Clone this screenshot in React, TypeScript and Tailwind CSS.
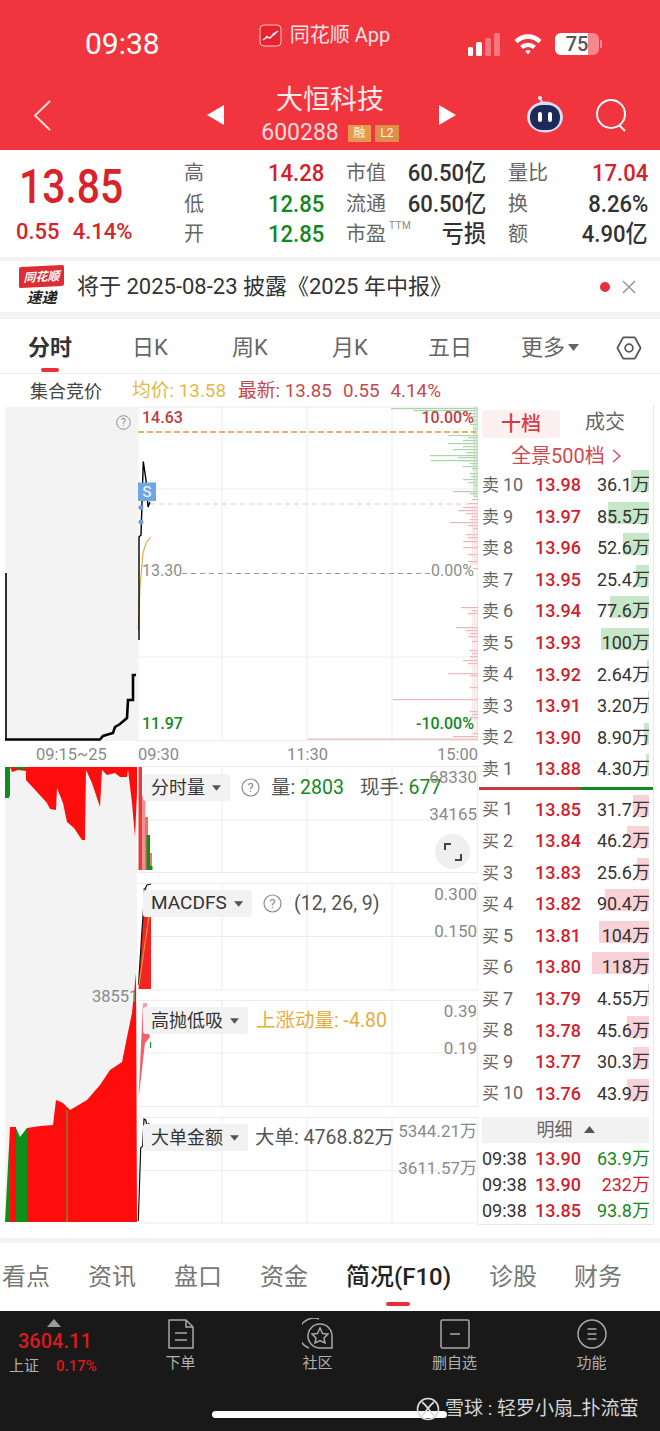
import React from 'react';

const asks = [
  { name: '卖', no: '10', price: '13.98', vol: '36.1万', bar: 18 },
  { name: '卖', no: '9', price: '13.97', vol: '85.5万', bar: 41 },
  { name: '卖', no: '8', price: '13.96', vol: '52.6万', bar: 26 },
  { name: '卖', no: '7', price: '13.95', vol: '25.4万', bar: 13 },
  { name: '卖', no: '6', price: '13.94', vol: '77.6万', bar: 39 },
  { name: '卖', no: '5', price: '13.93', vol: '100万', bar: 48 },
  { name: '卖', no: '4', price: '13.92', vol: '2.64万', bar: 2 },
  { name: '卖', no: '3', price: '13.91', vol: '3.20万', bar: 1 },
  { name: '卖', no: '2', price: '13.90', vol: '8.90万', bar: 5 },
  { name: '卖', no: '1', price: '13.88', vol: '4.30万', bar: 3 },
];

const bids = [
  { name: '买', no: '1', price: '13.85', vol: '31.7万', bar: 16 },
  { name: '买', no: '2', price: '13.84', vol: '46.2万', bar: 22 },
  { name: '买', no: '3', price: '13.83', vol: '25.6万', bar: 12 },
  { name: '买', no: '4', price: '13.82', vol: '90.4万', bar: 44 },
  { name: '买', no: '5', price: '13.81', vol: '104万', bar: 50 },
  { name: '买', no: '6', price: '13.80', vol: '118万', bar: 57 },
  { name: '买', no: '7', price: '13.79', vol: '4.55万', bar: 1 },
  { name: '买', no: '8', price: '13.78', vol: '45.6万', bar: 22 },
  { name: '买', no: '9', price: '13.77', vol: '30.3万', bar: 16 },
  { name: '买', no: '10', price: '13.76', vol: '43.9万', bar: 22 },
];

const greenDepth = [
  [408, 87], [410, 65], [413, 20], [416, 8], [420, 5], [424, 8], [428, 5], [435, 30], [437, 10], [440, 15],
  [443, 30], [446, 15], [449, 25], [452, 12], [455, 48], [457, 20], [460, 15], [463, 8], [466, 15], [468, 6],
  [460, 47], [473, 8], [476, 7], [479, 15], [482, 10], [485, 5], [491, 25], [493, 8], [496, 5], [499, 6],
];

const pinkDepth = [
  [503, 10], [507, 15], [510, 20], [513, 12], [516, 6], [519, 8], [522, 28], [525, 10], [528, 5], [534, 12],
  [537, 10], [541, 15], [547, 15], [554, 10], [561, 10], [568, 5], [607, 17], [610, 6], [613, 10], [627, 22],
  [630, 12], [633, 8], [636, 10], [641, 6], [650, 8], [653, 6], [656, 8], [660, 15], [663, 10], [673, 30],
  [675, 8], [687, 8], [699, 85], [711, 8], [714, 6], [717, 8], [733, 5], [736, 25], [738.5, 170],
];

const Caret = () => (
  <svg width="10" height="6" viewBox="0 0 10 6" className="ml-[7px]">
    <path d="M0 0H10L5 6Z" fill="#555" />
  </svg>
);

const Help = ({ className = '' }: { className?: string }) => (
  <svg width="19" height="19" viewBox="0 0 19 19" className={className}>
    <circle cx="9.5" cy="9.5" r="8.5" fill="none" stroke="#8a8a8a" strokeWidth="1.2" />
    <text x="9.5" y="14" textAnchor="middle" fontSize="13" fill="#8a8a8a" fontFamily="Roboto">?</text>
  </svg>
);

const Chip = ({ label, w, size = 'text-[18px]' }: { label: string; w: string; size?: string }) => (
  <div className={`flex h-[27px] items-center justify-between rounded-[3px] bg-[#f2f2f2] pl-[8px] pr-[9px] text-[#333] ${size} ${w}`}>
    <span className="whitespace-nowrap">{label}</span>
    <Caret />
  </div>
);

const ChartSvg = () => (
  <svg className="absolute inset-0" width="478" height="820" viewBox="0 405 478 820">
    {/* left auction panes */}
    <rect x="5" y="407" width="132" height="334" fill="#f3f3f3" />
    <rect x="5" y="766" width="132" height="456" fill="#f3f3f3" />

    {/* grid */}
    <g stroke="#ececec" strokeWidth="1" fill="none">
      <path d="M138 407H478M138 489H478M138 657H478M138 740.5H478" />
      <path d="M138 407V741M222 407V741M307 407V741M392 407V741M477.5 407V741" />
      <path d="M138 766.5H478M138 820H478M138 872.5H478M138 883.5H478M138 936.5H478M138 990H478M138 1000.5H478M138 1053H478M138 1106.5H478M138 1117.5H478M138 1170.5H478M138 1223H478" />
      <path d="M222 766V872M307 766V872M392 766V872M477.5 766V872" />
      <path d="M222 883V990M307 883V990M392 883V990M477.5 883V990" />
      <path d="M222 1000V1107M307 1000V1107M392 1000V1107M477.5 1000V1107" />
      <path d="M222 1117V1223M307 1117V1223M392 1117V1223M477.5 1117V1223" />
    </g>

    {/* depth bars */}
    {greenDepth.map(([y, len]) => (
      <rect key={`g${y}-${len}`} x={478 - len} y={y} width={len} height="1.2" fill="#a9d6a9" />
    ))}
    <rect x="473" y="407" width="5" height="90" fill="#bfe0bf" opacity="0.6" />
    {pinkDepth.map(([y, len]) => (
      <rect key={`p${y}-${len}`} x={478 - len} y={y} width={len} height="1.2" fill="#efb4b8" />
    ))}
    <rect x="472" y="505" width="6" height="60" fill="#f3c8cb" opacity="0.4" />
    <rect x="472" y="610" width="6" height="125" fill="#f3c8cb" opacity="0.35" />

    {/* price lines */}
    <path d="M138 432H476" stroke="#d99a3c" strokeWidth="1.4" strokeDasharray="6 3" />
    <path d="M150 504H476" stroke="#e2cdb8" strokeWidth="1" strokeDasharray="5 4" />
    <path d="M182 573.5H430" stroke="#999" strokeWidth="1" strokeDasharray="5 4" />
    <path d="M6 740V573" fill="none" stroke="#000" strokeWidth="1.6" />
    <path d="M5 739.5H100L103 736L113 733L115 727L120 724L127 718L128 700H133V675H136" fill="none" stroke="#000" strokeWidth="2.6" />
    <path d="M138.3 630L140 587L143 553L146 543L150.7 537" fill="none" stroke="#e0ad45" strokeWidth="1.2" />
    <path d="M139 640V537L141 535L143.3 461.5L146 480L148 507L150 502" fill="none" stroke="#000" strokeWidth="1.4" />
    <rect x="138" y="482.5" width="18" height="18.5" fill="#6da7e6" />
    <text x="147" y="497" textAnchor="middle" fontSize="15" fill="#fff" fontFamily="Roboto">S</text>
    <circle cx="141" cy="507.5" r="2.5" fill="#6d9be0" />
    <circle cx="141" cy="522" r="2.5" fill="#6d9be0" />

    {/* upper auction area */}
    <path d="M5 767H10V795L9 798H5Z" fill="#0d8f1a" />
    <path d="M10 767H26V771L18 770L12 772Z" fill="#ff0d0d" />
    <path d="M13 767H25V769L17 769Z" fill="#0d8f1a" />
    <path d="M26 767V780L37 792L47 803L50 809L56 810L57 788L63 803L67 822L74 828L82 840H85L86 770L92 783L100 807L102 770L107 775L115 773L120 777L127 777L128 770L132 803L135 837L137 793V767Z" fill="#ff0d0d" />

    {/* lower auction area */}
    <path d="M5 1222L10 1127H16V1222Z" fill="#0d8f1a" />
    <path d="M10 1127H16V1222H10Z" fill="#ff0d0d" />
    <path d="M16 1128L20 1137L27 1128V1222H16Z" fill="#0d8f1a" />
    <path d="M27 1128L40 1126L53 1125L56 1100L63 1103L70 1110L87 1100L100 1085L110 1070L122 1062L127 1037L132 1013L136 973L137 1222H27Z" fill="#ff0d0d" />
    <rect x="66" y="1110" width="2" height="112" fill="#a0622a" />

    {/* volume */}
    <rect x="138.5" y="767" width="3.5" height="103" fill="#e53c3c" />
    <rect x="142" y="796" width="3.5" height="74" fill="#ef8f8f" />
    <rect x="145" y="817" width="3" height="53" fill="#ef6d6d" />
    <rect x="146.5" y="835" width="3.5" height="35" fill="#0d8f1a" />
    <rect x="150" y="853" width="2" height="17" fill="#e8757a" />
    <rect x="150" y="866" width="2.5" height="4" fill="#0d8f1a" />

    {/* macd */}
    <path d="M138.5 989L143 914L151 908V989Z" fill="#f22424" />
    <rect x="143" y="888" width="3.5" height="28" fill="#e89a9a" />
    <path d="M138.5 985L142 930L145 889L147 885L151 884" fill="none" stroke="#111" strokeWidth="1.2" />
    <path d="M139 985L144 950L150 910" fill="none" stroke="#f0952e" strokeWidth="1.2" />

    {/* high low */}
    <path d="M138.5 1098L143 1003L146 1003L147 1027L150 1037L145 1043L141 1078Z" fill="#f2606a" />
    <rect x="143" y="1003" width="4" height="28" fill="#f0a0a0" />
    <rect x="150" y="1042" width="1.2" height="6" fill="#1a9a40" />

    {/* big order */}
    <path d="M138.3 1221L140.7 1148L142.7 1146L144 1119L145.7 1120L147.7 1128L149 1123" fill="none" stroke="#111" strokeWidth="1.2" />
  </svg>
);

const MainChart = () => (
  <div className="relative h-[335px] text-[16px] leading-none">
    <Help className="absolute left-[114px] top-[6px] scale-[0.8]" />
    <span className="absolute left-[142px] top-[3px] font-medium text-[#c23b40]">14.63</span>
    <span className="absolute right-[4px] top-[3px] font-medium text-[#c23b40]">10.00%</span>
    <span className="absolute left-[142px] top-[156px] text-[#8c8c8c]">13.30</span>
    <span className="absolute right-[4px] top-[156px] text-[#8c8c8c]">0.00%</span>
    <span className="absolute left-[142px] top-[309px] font-medium text-[#13881f]">11.97</span>
    <span className="absolute right-[4px] top-[309px] font-medium text-[#13881f]">-10.00%</span>
  </div>
);

const TimeAxis = () => (
  <div className="flex h-[26px] items-center text-[16.5px] text-[#8a8a8a]">
    <span className="ml-[36px] w-[102px]">09:15~25</span>
    <span className="w-[149px]">09:30</span>
    <span className="w-[150px]">11:30</span>
    <span>15:00</span>
  </div>
);

const Panel = ({ className = '', children }: { className?: string; children: React.ReactNode }) => (
  <div className={`relative h-[107px] ${className}`}>{children}</div>
);

const AxisLabel = ({ top, children }: { top: string; children: React.ReactNode }) => (
  <span className={`absolute right-[1px] text-[17px] leading-none text-[#8a8a8a] ${top}`}>{children}</span>
);

const SubPanels = () => (
  <div className="flex flex-col">
    <Panel>
      <div className="absolute left-[143px] top-[5px] flex items-center whitespace-nowrap">
        <Chip label="分时量" w="w-[87px]" />
        <Help className="ml-[11px]" />
        <span className="ml-[11px] text-[19.5px] text-[#555]">量: <span className="text-[#13881f]">2803</span></span>
        <span className="ml-[16px] text-[19.5px] text-[#555]">现手: <span className="text-[#13881f]">677</span></span>
      </div>
      <AxisLabel top="top-[1px]">68330</AxisLabel>
      <AxisLabel top="top-[38px]">34165</AxisLabel>
      <div className="absolute left-[435px] top-[66px] flex h-[35px] w-[35px] items-center justify-center rounded-full bg-[#efefef]">
        <svg width="20" height="20" viewBox="0 0 20 20" fill="none" stroke="#444" strokeWidth="2">
          <path d="M2 8V2H8M18 12V18H12" />
        </svg>
      </div>
    </Panel>
    <Panel className="mt-[10px]">
      <div className="absolute left-[143px] top-[4px] flex items-center whitespace-nowrap">
        <Chip label="MACDFS" w="w-[109px]" size="text-[19px]" />
        <Help className="ml-[11px]" />
        <span className="ml-[12px] text-[19.5px] text-[#555]">(12, 26, 9)</span>
      </div>
      <AxisLabel top="top-[1px]">0.300</AxisLabel>
      <AxisLabel top="top-[38px]">0.150</AxisLabel>
    </Panel>
    <Panel className="mt-[10px]">
      <div className="absolute left-[143px] top-[4px] flex items-center whitespace-nowrap">
        <Chip label="高抛低吸" w="w-[105px]" />
        <span className="ml-[8px] text-[19.5px] text-[#e5ad3c]">上涨动量: -4.80</span>
      </div>
      <AxisLabel top="top-[1px]">0.39</AxisLabel>
      <AxisLabel top="top-[38px]">0.19</AxisLabel>
      <span className="absolute left-[92px] top-[-13px] text-[16.5px] leading-none text-[#8a8a8a]">38551</span>
    </Panel>
    <Panel className="mt-[10px]">
      <div className="absolute left-[143px] top-[4px] flex items-center whitespace-nowrap">
        <Chip label="大单金额" w="w-[105px]" />
        <span className="ml-[7px] text-[19.5px] text-[#555]">大单: 4768.82万</span>
      </div>
      <AxisLabel top="top-[4px]">5344.21万</AxisLabel>
      <AxisLabel top="top-[41px]">3611.57万</AxisLabel>
    </Panel>
  </div>
);

const BookRow = ({ row, color }: { row: (typeof asks)[number]; color: string }) => (
  <div className="flex h-[31.55px] items-center text-[18px]">
    <span className="w-[53px] whitespace-nowrap text-[#666]">
      <span className="text-[17px]">{row.name}</span>
      <span className="ml-[4px]">{row.no}</span>
    </span>
    <span className="font-medium text-[#d2202c]">{row.price}</span>
    <span className="relative flex-1 text-right text-[#333]">
      <span className={`absolute right-[1px] top-[-1px] h-[22px] ${color}`} style={{ width: row.bar }} />
      <span className="relative">{row.vol}</span>
    </span>
  </div>
);

const Trade = ({ price, vol, color }: { price: string; vol: string; color: string }) => (
  <div className="flex h-[26px] items-center text-[18px]">
    <span className="w-[53px] text-[#333]">09:38</span>
    <span className="font-medium text-[#d2202c]">{price}</span>
    <span className={`flex-1 text-right ${color}`}>{vol}</span>
  </div>
);

const OrderBook = () => (
  <div className="h-[820px] w-[176px] border-r border-b border-[#e8e8e8] pl-[4px] pr-[3px]">
    <div className="flex h-[33px] items-end text-[20px]">
      <div className="flex h-[28px] w-[78px] items-center justify-center rounded-[3px] bg-[#fdf0f0] font-medium text-[#d93a40]">十档</div>
      <div className="flex-1 pb-[1px] text-center text-[#666]">成交</div>
    </div>
    <div className="flex h-[31px] items-center justify-center pt-[5px] text-[20px] text-[#cf4a4f]">
      全景500档
      <svg width="9" height="14" viewBox="0 0 9 14" className="ml-[7px]" fill="none" stroke="#cf4a4f" strokeWidth="1.4">
        <path d="M1 1L8 7L1 13" />
      </svg>
    </div>
    <div>
      {asks.map((row) => (
        <BookRow key={row.no} row={row} color="bg-[#c8e6c8]" />
      ))}
    </div>
    <div className="-ml-[3px] -mr-[3px] mt-[3px] flex h-[3px]">
      <div className="w-[101px] bg-[#c9383d]" />
      <div className="flex-1 bg-[#138a1e]" />
    </div>
    <div className="mt-[3px]">
      {bids.map((row) => (
        <BookRow key={row.no} row={row} color="bg-[#f8d2d6]" />
      ))}
    </div>
    <div className="mt-[8px] mr-[1px] flex h-[26px] items-center justify-center bg-[#f2f2f2] text-[18px] text-[#666]">
      明细
      <svg width="11" height="7" viewBox="0 0 11 7" className="ml-[11px]">
        <path d="M0 7H11L5.5 0Z" fill="#555" />
      </svg>
    </div>
    <div className="mt-[3px]">
      <Trade price="13.90" vol="63.9万" color="text-[#13881f]" />
      <Trade price="13.90" vol="232万" color="text-[#d2202c]" />
      <Trade price="13.85" vol="93.8万" color="text-[#13881f]" />
    </div>
  </div>
);

const StatusBar = () => (
  <div className="relative flex h-[80px] items-start text-white">
    <span className="ml-[85px] mt-[28px] text-[30px] leading-[32px]">09:38</span>
    <div className="ml-[99px] mt-[23px] flex items-center">
      <svg width="23" height="23" viewBox="0 0 23 23">
        <rect x="1" y="1" width="21" height="21" rx="4" fill="#e8232f" stroke="#ffc9c9" strokeWidth="1" />
        <path d="M4 16L8 13L11 14L15 10L19 7" fill="none" stroke="#fff" strokeWidth="1.5" />
        <circle cx="8" cy="13" r="1.3" fill="#fff" />
        <circle cx="15" cy="10" r="1.3" fill="#fff" />
      </svg>
      <span className="ml-[8px] text-[20px] leading-[24px] text-[#fbe3e3]">同花顺 App</span>
    </div>
    <div className="absolute left-[468px] top-[32px] flex h-[24px] items-end gap-[3px]">
      <div className="h-[9px] w-[5px] rounded-[1.5px] bg-white" />
      <div className="h-[14px] w-[6px] rounded-[1.5px] bg-white" />
      <div className="h-[18px] w-[6px] rounded-[1.5px] bg-[#f8777e]" />
      <div className="h-[23px] w-[6px] rounded-[1.5px] bg-[#f8777e]" />
    </div>
    <svg className="absolute left-[513px] top-[32px]" width="30" height="23" viewBox="0 0 30 23">
      <path d="M1.5 8A19 19 0 0 1 28.5 8L25.5 11.3A15 15 0 0 0 4.5 11.3Z" fill="#fff" />
      <path d="M7 13.7A12 12 0 0 1 23 13.7L20 17A8 8 0 0 0 10 17Z" fill="#fff" />
      <path d="M12.3 19.2A4 4 0 0 1 17.7 19.2L15 22.5Z" fill="#fff" />
    </svg>
    <div className="absolute left-[555px] top-[33px] flex items-center">
      <div className="relative flex h-[22px] w-[44px] items-center justify-center overflow-hidden rounded-[6px] bg-[#f8878d]">
        <div className="absolute inset-y-0 left-0 w-[33px] bg-white" />
        <span className="relative text-[20px] font-medium leading-none text-[#555]">75</span>
      </div>
      <div className="ml-[1px] h-[8px] w-[2px] rounded-r-[1px] bg-[#f8878d]" />
    </div>
  </div>
);

const TitleBar = () => (
  <div className="relative h-[70px] text-white">
    <svg className="absolute left-[33px] top-[20px]" width="19" height="31" viewBox="0 0 19 31" fill="none" stroke="#fde2e2" strokeWidth="1.8">
      <path d="M17 1L2 15.5L17 30" />
    </svg>
    <svg className="absolute left-[207px] top-[25px]" width="17" height="20" viewBox="0 0 17 20">
      <path d="M17 0V20L0 10Z" fill="#fff" />
    </svg>
    <div className="flex flex-col items-center pt-[1px]">
      <span className="text-[27px] leading-[38px] text-[#fdecec]">大恒科技</span>
      <div className="flex h-[28px] items-center">
        <span className="text-[23px] text-[#fbdcdc]">600288</span>
        <span className="ml-[9px] flex h-[17px] w-[23px] items-center justify-center bg-[#e39a4e] text-[12px] text-[#fff2df]">融</span>
        <span className="ml-[4px] flex h-[17px] w-[24px] items-center justify-center bg-[#dd8f4a] text-[12px] text-[#fff2df]">L2</span>
      </div>
    </div>
    <svg className="absolute left-[439px] top-[25px]" width="17" height="20" viewBox="0 0 17 20">
      <path d="M0 0V20L17 10Z" fill="#fff" />
    </svg>
    <svg className="absolute left-[525px] top-[15px]" width="40" height="40" viewBox="0 0 40 40">
      <circle cx="15" cy="3" r="2" fill="#e9edf8" />
      <path d="M15 4L18 8" stroke="#e9edf8" strokeWidth="1.5" />
      <ellipse cx="20" cy="22" rx="18" ry="15.5" fill="#d8def2" />
      <rect x="5" y="10" width="30" height="25" rx="12" fill="#1c2a57" />
      <rect x="13" y="17" width="4" height="10" rx="2" fill="#fff" />
      <rect x="23" y="17" width="4" height="10" rx="2" fill="#fff" />
    </svg>
    <svg className="absolute left-[595px] top-[18px]" width="34" height="34" viewBox="0 0 34 34" fill="none" stroke="#fff" strokeWidth="2">
      <circle cx="16" cy="16" r="14" />
      <path d="M24 27L30 33" />
    </svg>
  </div>
);

const QuoteCell = ({ label, value, color, children }: { label: string; value: string; color: string; children?: React.ReactNode }) => (
  <div className="relative flex h-[30.5px] items-center justify-between">
    <span className="text-[20px] text-[#666]">{label}</span>
    {children}
    <span className={`inline-block origin-right scale-x-[0.92] text-[24px] font-medium ${color}`}>{value}</span>
  </div>
);

const Quote = () => (
  <div className="flex h-[107px] bg-white">
    <div className="w-[184px] pt-[9px] text-[#d8232a]">
      <div className="ml-[19px] h-[52px] origin-left scale-x-[0.85] text-[48px] font-medium leading-[56px]">13.85</div>
      <div className="ml-[16px] mt-[7px] flex text-[22px] font-medium leading-[28px]">
        <span>0.55</span>
        <span className="ml-[13px]">4.14%</span>
      </div>
    </div>
    <div className="grid h-fit w-[464px] grid-cols-3 gap-x-[22px] pt-[8px]">
      <QuoteCell label="高" value="14.28" color="text-[#d2202c]" />
      <QuoteCell label="市值" value="60.50亿" color="text-[#333]" />
      <QuoteCell label="量比" value="17.04" color="text-[#d2202c]" />
      <QuoteCell label="低" value="12.85" color="text-[#13881f]" />
      <QuoteCell label="流通" value="60.50亿" color="text-[#333]" />
      <QuoteCell label="换" value="8.26%" color="text-[#333]" />
      <QuoteCell label="开" value="12.85" color="text-[#13881f]" />
      <QuoteCell label="市盈" value="亏损" color="text-[#333]">
        <span className="absolute left-[43px] top-[-1px] text-[10px] tracking-[0.5px] text-[#888]">TTM</span>
      </QuoteCell>
      <QuoteCell label="额" value="4.90亿" color="text-[#333]" />
    </div>
  </div>
);

const News = () => (
  <div className="box-content flex h-[51px] items-center border-t-[4px] border-[#f3f3f3] bg-white">
    <div className="ml-[19px] flex w-[45px] flex-col items-center">
      <div className="flex h-[21px] w-[45px] -skew-y-3 items-center justify-center rounded-[2px] bg-[#dd2c33] text-[12px] font-bold italic leading-none text-white">同花顺</div>
      <div className="mt-[2px] text-[15px] font-bold italic leading-[18px] text-[#222]">速递</div>
    </div>
    <span className="ml-[13px] whitespace-nowrap text-[22px] text-[#333]">将于 2025-08-23 披露《2025 年中报》</span>
    <div className="ml-[auto] h-[10px] w-[10px] rounded-full bg-[#e8303a]" />
    <svg width="14" height="14" viewBox="0 0 14 14" className="ml-[12px] mr-[24px]" stroke="#999" strokeWidth="1.6">
      <path d="M1 1L13 13M13 1L1 13" />
    </svg>
  </div>
);

const KTabs = () => {
  const tabs = ['日K', '周K', '月K', '五日'];
  return (
    <div className="flex h-[55px] items-center border-b border-[#ececec] bg-white pt-[3px] text-[22px] text-[#666]">
      <div className="relative flex h-full w-[100px] items-center justify-center font-bold text-[#333]">
        分时
        <div className="absolute bottom-[1px] left-[41px] h-[4px] w-[18px] rounded-full bg-[#e8303a]" />
      </div>
      {tabs.map((tab) => (
        <div key={tab} className="flex w-[100px] justify-center">{tab}</div>
      ))}
      <div className="flex w-[100px] items-center justify-center">
        更多
        <svg width="11" height="7" viewBox="0 0 11 7" className="ml-[3px]">
          <path d="M0 0H11L5.5 7Z" fill="#666" />
        </svg>
      </div>
      <svg width="58" height="30" viewBox="0 0 60 30" fill="none" stroke="#555" strokeWidth="1.8">
        <path d="M24 4H36L42 15L36 26H24L18 15Z" strokeLinejoin="round" />
        <circle cx="30" cy="15" r="4" />
      </svg>
    </div>
  );
};

const InfoRow = () => (
  <div className="flex h-[31px] items-center whitespace-nowrap bg-white pt-[3px] text-[18.8px]">
    <span className="ml-[30px] text-[18px] text-[#444]">集合竞价</span>
    <span className="ml-[30px] text-[#e5b84c]">均价: 13.58</span>
    <span className="ml-[12px] text-[#c44a4f]">最新: 13.85</span>
    <span className="ml-[11px] text-[#c44a4f]">0.55</span>
    <span className="ml-[11px] text-[#c44a4f]">4.14%</span>
  </div>
);

const BottomTabs = () => {
  const tabs = ['看点', '资讯', '盘口', '资金'];
  return (
    <div className="flex h-[68px] items-center whitespace-nowrap bg-white text-[24px] text-[#777]">
      <div className="ml-[2px] w-[67px]">{tabs[0]}</div>
      {tabs.slice(1).map((t) => (
        <div key={t} className="w-[86px] text-center">{t}</div>
      ))}
      <div className="relative ml-[19px] flex h-full w-[105px] items-center justify-center font-medium text-[#222]">
        简况(F10)
        <div className="absolute bottom-[5px] left-[40px] h-[4px] w-[24px] rounded-full bg-[#e8303a]" />
      </div>
      <div className="ml-[38px] w-[48px] text-center">诊股</div>
      <div className="ml-[37px] w-[48px] text-center">财务</div>
    </div>
  );
};

const NavIcon = ({ children }: { children: React.ReactNode }) => (
  <svg width="32" height="32" viewBox="0 0 32 32" fill="none" stroke="#a8a8a8" strokeWidth="1.5">{children}</svg>
);

const NavItem = ({ label, children }: { label: string; children: React.ReactNode }) => (
  <div className="flex w-[137px] flex-col items-center pt-[7px]">
    {children}
    <span className="mt-[2px] text-[15px] leading-[22px] text-[#b0b0b0]">{label}</span>
  </div>
);

const BottomNav = () => (
  <div className="relative h-[120px] bg-[#191919]">
    <div className="flex">
      <div className="w-[112px]">
        <svg width="14" height="8" viewBox="0 0 14 8" className="ml-[47px] mt-[8px]">
          <path d="M0 8H14L7 0Z" fill="#9a9a9a" />
        </svg>
        <div className="ml-[18px] mt-[1px] text-[20px] font-medium leading-[26px] text-[#d91a1f]">3604.11</div>
        <div className="ml-[9px] mt-[1px] flex items-center text-[15px] leading-[22px]">
          <span className="text-[#b0b0b0]">上证</span>
          <span className="ml-[17px] font-medium text-[#d91a1f]">0.17%</span>
        </div>
      </div>
      <NavItem label="下单">
        <NavIcon>
          <path d="M4 2H21L28 9V30H4Z" strokeLinejoin="round" />
          <path d="M21 2V9H28M10 15H22M10 22H22" />
        </NavIcon>
      </NavItem>
      <NavItem label="社区">
        <NavIcon>
          <path d="M7 30A15 15 0 0 1 17 1" />
          <path d="M30 30H18A12 12 0 1 1 30 18Z" />
          <path d="M18 10L20.5 15.5L26 16L22 20L23 25L18 22.5L13 25L14 20L10 16L15.5 15.5Z" />
        </NavIcon>
      </NavItem>
      <NavItem label="删自选">
        <NavIcon>
          <rect x="2" y="2" width="28" height="28" rx="1.5" />
          <path d="M11 16H21" />
        </NavIcon>
      </NavItem>
      <NavItem label="功能">
        <NavIcon>
          <circle cx="16" cy="16" r="14" />
          <path d="M11.5 11H20.5M11.5 16H20.5M11.5 21H20.5" />
        </NavIcon>
      </NavItem>
    </div>
    <div className="absolute left-[212px] top-[100px] h-[7px] w-[235px] rounded-full bg-white" />
    <div className="absolute left-[416px] top-[86px] flex items-center text-[19px] leading-[24px] text-[#d4d4d4]">
      <svg width="24" height="24" viewBox="0 0 24 24" fill="none" stroke="#dcdcdc" strokeWidth="1.6">
        <circle cx="12" cy="12" r="10.5" />
        <path d="M6 5C10 8 14 14 18 19M18 5C14 8 10 14 6 19" />
      </svg>
      <span className="ml-[5px] whitespace-nowrap">雪球 : 轻罗小扇_扑流萤</span>
    </div>
  </div>
);

export default function App() {
  return (
    <div className="h-[1431px] w-[660px] overflow-hidden bg-white font-['Roboto','Noto_Sans_CJK_SC',sans-serif]">
      <div className="h-[150px] bg-[#f1353f]">
        <StatusBar />
        <TitleBar />
      </div>
      <Quote />
      <News />
      <div className="h-[7px] bg-[#f3f3f3]" />
      <KTabs />
      <InfoRow />
      <div className="flex h-[820px]">
        <div className="relative h-[820px] w-[478px]">
          <ChartSvg />
          <div className="relative pt-[2px]">
            <MainChart />
            <TimeAxis />
            <SubPanels />
          </div>
        </div>
        <OrderBook />
      </div>
      <div className="mt-[13px] h-[5px] bg-[#f3f3f3]" />
      <BottomTabs />
      <BottomNav />
    </div>
  );
}
